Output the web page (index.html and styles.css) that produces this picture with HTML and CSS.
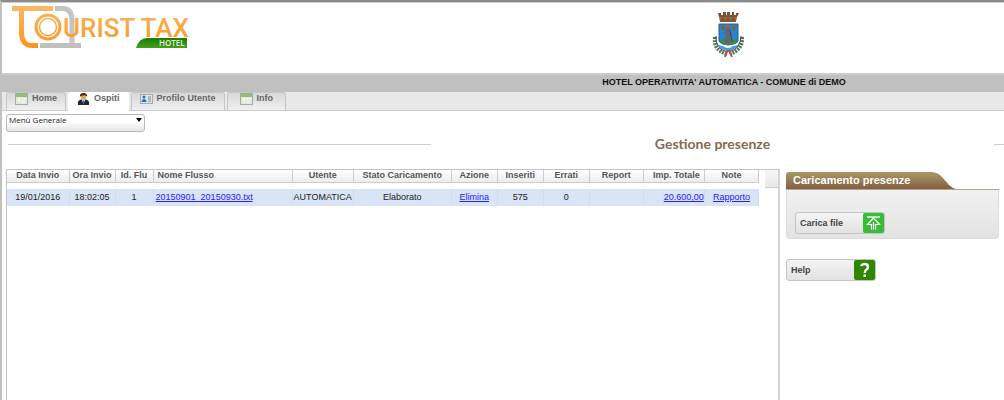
FILE: index.html
```html
<!DOCTYPE html>
<html lang="it">
<head>
    <meta charset="UTF-8">
    <meta name="viewport" content="width=device-width, initial-scale=1.0">
    <title>Tourist Tax Hotel - Gestione presenze</title>
    <link rel="stylesheet" href="styles.css">
</head>
<body>
    <header class="header">
        <svg class="logo" width="180" height="44" viewBox="0 0 180 44" role="img" aria-label="Tourist Tax Hotel">
            <defs>
                <linearGradient id="orange" gradientUnits="userSpaceOnUse" x1="0" y1="0" x2="0" y2="42">
                    <stop offset="0" stop-color="#f6b968"/>
                    <stop offset="1" stop-color="#ff9418"/>
                </linearGradient>
                <linearGradient id="green" x1="0" y1="0" x2="0" y2="1">
                    <stop offset="0" stop-color="#1c7c05"/>
                    <stop offset="1" stop-color="#43a11b"/>
                </linearGradient>
            </defs>
            <path d="M43 2.500H51Q60 3 60 14V38" fill="none" stroke="#c6c4c2" stroke-width="5"/>
            <path d="M28 39.500H69" stroke="#c2c0be" stroke-width="5"/>
            <text class="logo-text" x="51" y="31" fill="url(#orange)">URIST TAX</text>
            <path d="M0 0H41V5H12V28Q13 37 19 37H26V42H19Q8 41 7 28V5H0Z" fill="url(#orange)"/>
            <circle cx="36" cy="21" r="15" fill="#fff"/>
            <circle cx="36" cy="21" r="12" fill="none" stroke="url(#orange)" stroke-width="3"/>
            <circle cx="36" cy="21" r="8.500" fill="none" stroke="url(#orange)" stroke-width="1.500"/>
            <path d="M124 42Q127 32 135 32H175V42Z" fill="url(#green)"/>
            <text class="logo-hotel" x="147" y="40">HOTEL</text>
        </svg>
        <svg class="crest" width="32" height="46" viewBox="0 0 32 46" role="img" aria-label="Stemma del Comune">
            <path d="M7 5L6 1H9V3H11V0H14V3H15V0H18V3H20V0H22V3H24V1H27L25 5Z" fill="#7d5133"/>
            <path d="M7 5H25L24 10H8Z" fill="#96673f"/>
            <path d="M8 9H24" stroke="#68482f"/>
            <path d="M11 6V8M16 6V8M21 6V8" stroke="#4b3428"/>
            <path d="M7 12H26V29Q25 32 16 33Q8 32 7 29Z" fill="#2585d5" stroke="#315b7b"/>
            <path d="M7 29Q16 24 26 29Q25 32 16 33Q8 32 7 29Z" fill="#438448"/>
            <circle cx="16" cy="14" r="2" fill="#8d6754"/>
            <path d="M14 16H18L20 23L18 23V31H16V25L15 31H13L14 23L12 22Z" fill="#66636c"/>
            <path d="M18 18L20 30" stroke="#4f463e"/>
            <path d="M9 14L12 16L10 18M24 14L21 16L23 18" fill="none" stroke="#78613b" stroke-width="2"/>
            <path d="M3 25Q1 38 15 42M30 25Q31 38 17 42" fill="none" stroke="#55755b" stroke-width="4" stroke-dasharray="2 1"/>
            <path d="M4 24Q3 36 15 40M29 24Q29 36 17 40" fill="none" stroke="#37523b" stroke-width="1"/>
            <path d="M6 33L11 34Q16 38 21 34L26 33L24 36Q16 41 8 36Z" fill="#4b9cdd"/>
            <path d="M14 39H19M15 40L13 45M18 40L20 45" stroke="#ae5c57" stroke-width="2"/>
        </svg>
    </header>

    <div class="company-bar">HOTEL OPERATIVITA' AUTOMATICA - COMUNE di DEMO</div>

    <svg class="symbols" width="0" height="0" aria-hidden="true">
        <symbol id="calendar" viewBox="0 0 13 12">
            <rect x=".5" y=".5" width="12" height="11" fill="#e4e7e1" stroke="#a3ad9c"/>
            <path d="M1 1H12V4H1Z" fill="#92c36a"/>
            <path d="M3 6H5M6 6H8M9 6H11M3 8H5M7 9H10" stroke="#fff"/>
        </symbol>
    </svg>

    <nav class="tabs">
        <a class="tab" href="#home"><svg width="13" height="12"><use href="#calendar"/></svg>Home</a>
        <a class="tab active" href="#ospiti">
            <svg width="13" height="12" viewBox="0 0 14 13">
                <path d="M1 13V10Q1 8 4 7H10Q13 8 13 10V13Z" fill="#252629"/>
                <path d="M5 7H9L7 12Z" fill="#e9edf2"/>
                <path d="M6 8H8L7 13Z" fill="#306a9d"/>
                <circle cx="7" cy="4" r="3" fill="#e5a75d"/>
                <path d="M3 4Q3 0 7 0Q11 0 11 4Q8 1 3 4Z" fill="#3a2418"/>
            </svg>Ospiti</a>
        <a class="tab" href="#profilo">
            <svg width="13" height="12" viewBox="0 0 13 12">
                <rect x=".5" y="1.500" width="12" height="9" fill="#dce4ed" stroke="#a5abb2"/>
                <circle cx="4" cy="4" r="1.500" fill="#3569ac"/>
                <path d="M1.500 9Q2 6 4 6Q6 6 6.500 9Z" fill="#2f72c5"/>
                <path d="M8 4H11M8 6H11M8 8H11" stroke="#858c94"/>
            </svg>Profilo Utente</a>
        <a class="tab" href="#info"><svg width="13" height="12"><use href="#calendar"/></svg>Info</a>
    </nav>

    <main class="content">
        <div class="menu">
            <select class="menu-select" aria-label="Menù">
                <option>Menù Generale</option>
            </select>
            <svg class="menu-arrow" width="6" height="4" viewBox="0 0 6 4"><path d="M0 0H6L3 4Z"/></svg>
        </div>

        <h1 class="page-title">Gestione presenze</h1>

        <div class="columns">
            <div class="grid-box">
                <table class="grid">
                    <colgroup>
                        <col class="c-date"><col class="c-small"><col class="c-id"><col class="c-name">
                        <col class="c-medium"><col class="c-status"><col class="c-small"><col class="c-small">
                        <col class="c-small"><col class="c-note"><col class="c-medium"><col class="c-note">
                    </colgroup>
                    <thead>
                        <tr>
                            <th>Data Invio</th>
                            <th>Ora Invio</th>
                            <th>Id. Flu</th>
                            <th class="left">Nome Flusso</th>
                            <th>Utente</th>
                            <th>Stato Caricamento</th>
                            <th>Azione</th>
                            <th>Inseriti</th>
                            <th>Errati</th>
                            <th>Report</th>
                            <th class="right">Imp. Totale</th>
                            <th>Note</th>
                        </tr>
                    </thead>
                    <tbody>
                        <tr class="spacer"><td colspan="12"></td></tr>
                        <tr class="row">
                            <td>19/01/2016</td>
                            <td>18:02:05</td>
                            <td>1</td>
                            <td class="left"><a href="#file">20150901_20150930.txt</a></td>
                            <td>AUTOMATICA</td>
                            <td>Elaborato</td>
                            <td><a href="#elimina">Elimina</a></td>
                            <td>575</td>
                            <td>0</td>
                            <td></td>
                            <td class="right"><a href="#totale">20.600,00</a></td>
                            <td><a href="#rapporto">Rapporto</a></td>
                        </tr>
                    </tbody>
                </table>
                <div class="grid-scroll"></div>
            </div>

            <aside class="side">
                <section class="panel">
                    <div class="panel-head">
                        <svg class="panel-tab" width="170" height="17" viewBox="0 0 170 17" aria-hidden="true">
                            <defs>
                                <linearGradient id="brown" x1="0" y1="0" x2="0" y2="1">
                                    <stop offset="0" stop-color="#a89a68"/>
                                    <stop offset="1" stop-color="#855d42"/>
                                </linearGradient>
                            </defs>
                            <path d="M0 17V3Q0 0 3 0H146Q152 0 157 6L163 13Q166 16 170 17Z" fill="url(#brown)"/>
                        </svg>
                        <h2 class="panel-title">Caricamento presenze</h2>
                    </div>
                    <div class="panel-body">
                        <button class="btn" type="button">
                            <span>Carica file</span>
                            <svg width="21" height="20" viewBox="0 0 21 20">
                                <rect width="21" height="20" rx="2" fill="#35bd35"/>
                                <path d="M4 4H17" stroke="#fff" stroke-width="1.300"/>
                                <path d="M10.500 5L4.500 11.500H8.500V16.500M10.500 5L16.500 11.500H12.500V16.500M10.500 9V16.500" fill="none" stroke="#fff" stroke-width="1.200"/>
                            </svg>
                        </button>
                    </div>
                </section>
                <button class="btn" type="button">
                    <span>Help</span>
                    <svg width="21" height="20" viewBox="0 0 21 20">
                        <rect width="21" height="20" rx="2" fill="#2f8600"/>
                        <path d="M7 6Q8 4 10.500 4Q14 4 14 7Q14 8.500 12.500 9.500Q10.800 10.500 10.800 13" fill="none" stroke="#fff" stroke-width="2.400"/>
                        <path d="M9.500 14.500H12V17H9.500Z" fill="#fff"/>
                    </svg>
                </button>
            </aside>
        </div>
    </main>
</body>
</html>
```

FILE: styles.css
```css
* {
    box-sizing: border-box;
}

body {
    display: flex;
    flex-direction: column;
    min-height: 100vh;
    margin: 0;
    border-top: 2px solid #8b8b8b;
    border-left: 2px solid #c0c0c0;
    background-color: #fff;
    color: #222;
    font-family: "Liberation Sans", Arial, sans-serif;
    font-size: 9px;
}

.header {
    display: grid;
    grid-template-columns: 710px 1fr;
    height: 71px;
    padding-top: 3px;
    border-top: 1px solid #ccc;
}

.logo {
    margin-left: 10px;
}

.logo-text {
    font: 500 26px Roboto, sans-serif;
}

.logo-hotel {
    fill: #e8f5df;
    font: 600 8px "Open Sans", sans-serif;
}

.crest {
    margin-top: 6px;
}

.company-bar {
    height: 19px;
    padding-left: 442px;
    border-top: 2px solid #cdcdcd;
    background-color: #c0c0c0;
    color: #111;
    font-weight: bold;
    line-height: 14px;
    text-align: center;
}

.symbols {
    position: absolute;
}

.tabs {
    display: flex;
    gap: 2px;
    height: 19px;
    padding-left: 4px;
    border-bottom: 1px solid #ccc;
    background-color: #e8e8e8;
}

.tab {
    display: flex;
    gap: 4px;
    height: 18px;
    padding: 0 8px;
    border: 1px solid #c6c6c6;
    border-bottom: none;
    border-radius: 3px 3px 0 0;
    background: linear-gradient(#d8d8d8, #efefef);
    color: #666;
    font-weight: bold;
    line-height: 11px;
    text-decoration: none;
}

.tab:last-child {
    padding: 0 12px;
}

.tab.active {
    height: 19px;
    border-color: #fff;
    background: #fff;
}

.content {
    display: flex;
    flex: 1;
    flex-direction: column;
    padding: 3px 0 0 4px;
}

.menu {
    position: relative;
    width: 139px;
}

.menu-select {
    display: block;
    width: 100%;
    height: 18px;
    padding: 0 2px 6px;
    appearance: none;
    border: 1px solid #b5b8c2;
    border-radius: 3px;
    background: linear-gradient(#fff 40%, #e4e4e4);
    color: #222;
    font-family: "Open Sans", sans-serif;
    font-size: 8px;
    line-height: 10px;
}

.menu-arrow {
    position: absolute;
    top: 4px;
    right: 3px;
    pointer-events: none;
}

.page-title {
    display: grid;
    grid-template-columns: 423px 1fr 10px;
    align-items: center;
    height: 24px;
    margin: 0 0 0 2px;
    color: #85694f;
    font-family: Lato, sans-serif;
    font-size: 14px;
    line-height: 24px;
    text-align: center;
}

.page-title::before,
.page-title::after {
    height: 1px;
    background-color: #ccc;
    content: "";
}

.columns {
    display: flex;
    flex: 1;
    gap: 6px;
    margin-top: 13px;
}

.grid-box {
    display: flex;
    gap: 6px;
    align-items: flex-start;
    border: 1px solid #c1c3cf;
    border-right: 2px solid #d2d3da;
    border-bottom: none;
}

.grid {
    width: 752px;
    border-collapse: collapse;
    table-layout: fixed;
}

.c-date { width: 62px; }
.c-small { width: 46px; }
.c-id { width: 38px; }
.c-name { width: 139px; }
.c-medium { width: 61px; }
.c-status { width: 98px; }
.c-note { width: 54px; }

.grid th,
.grid td {
    overflow: hidden;
    padding: 0;
    text-align: center;
    white-space: nowrap;
}

.grid th {
    height: 12px;
    border-right: 1px solid #ccc;
    border-bottom: 1px solid #ccc;
    background: linear-gradient(#fff, #ececec);
    color: #555;
    line-height: 11px;
}

.grid .spacer td {
    height: 7px;
}

.grid .row td {
    height: 17px;
    border-right: 1px solid #d0dcef;
    background-color: #d9e4f6;
    line-height: 17px;
}

.grid .left {
    padding-left: 2px;
    text-align: left;
}

.grid th.left {
    padding-left: 4px;
}

.grid .right {
    text-align: right;
}

.grid th.right {
    padding-right: 4px;
}

.grid a {
    color: #22f;
}

.grid-scroll {
    width: 13px;
    height: 18px;
    border-bottom: 1px solid #ccc;
    background: linear-gradient(#f7f7f7, #e8e8e8);
}

.side {
    flex: 1;
    padding: 3px 5px 0 0;
}

.panel {
    margin-bottom: 20px;
}

.panel-head {
    display: grid;
    border-bottom: 1px solid #b5a68f;
}

.panel-tab,
.panel-title {
    grid-area: 1 / 1;
}

.panel-title {
    margin: 0;
    padding-left: 7px;
    color: #fff;
    font-size: 11px;
    line-height: 16px;
}

.panel-body {
    padding: 22px 8px 4px;
    border: 1px solid #dcdcdc;
    border-top: none;
    border-radius: 0 0 4px 4px;
    background: linear-gradient(#f1f1f1, #e3e3e3);
}

.btn {
    display: flex;
    justify-content: space-between;
    align-items: center;
    width: 90px;
    height: 22px;
    padding: 0 0 0 4px;
    border: 1px solid #c4c4c4;
    border-radius: 3px;
    background: linear-gradient(#f4f4f4, #e2e2e2);
    color: #444;
    font-family: inherit;
    font-size: 9px;
    font-weight: bold;
}
```
